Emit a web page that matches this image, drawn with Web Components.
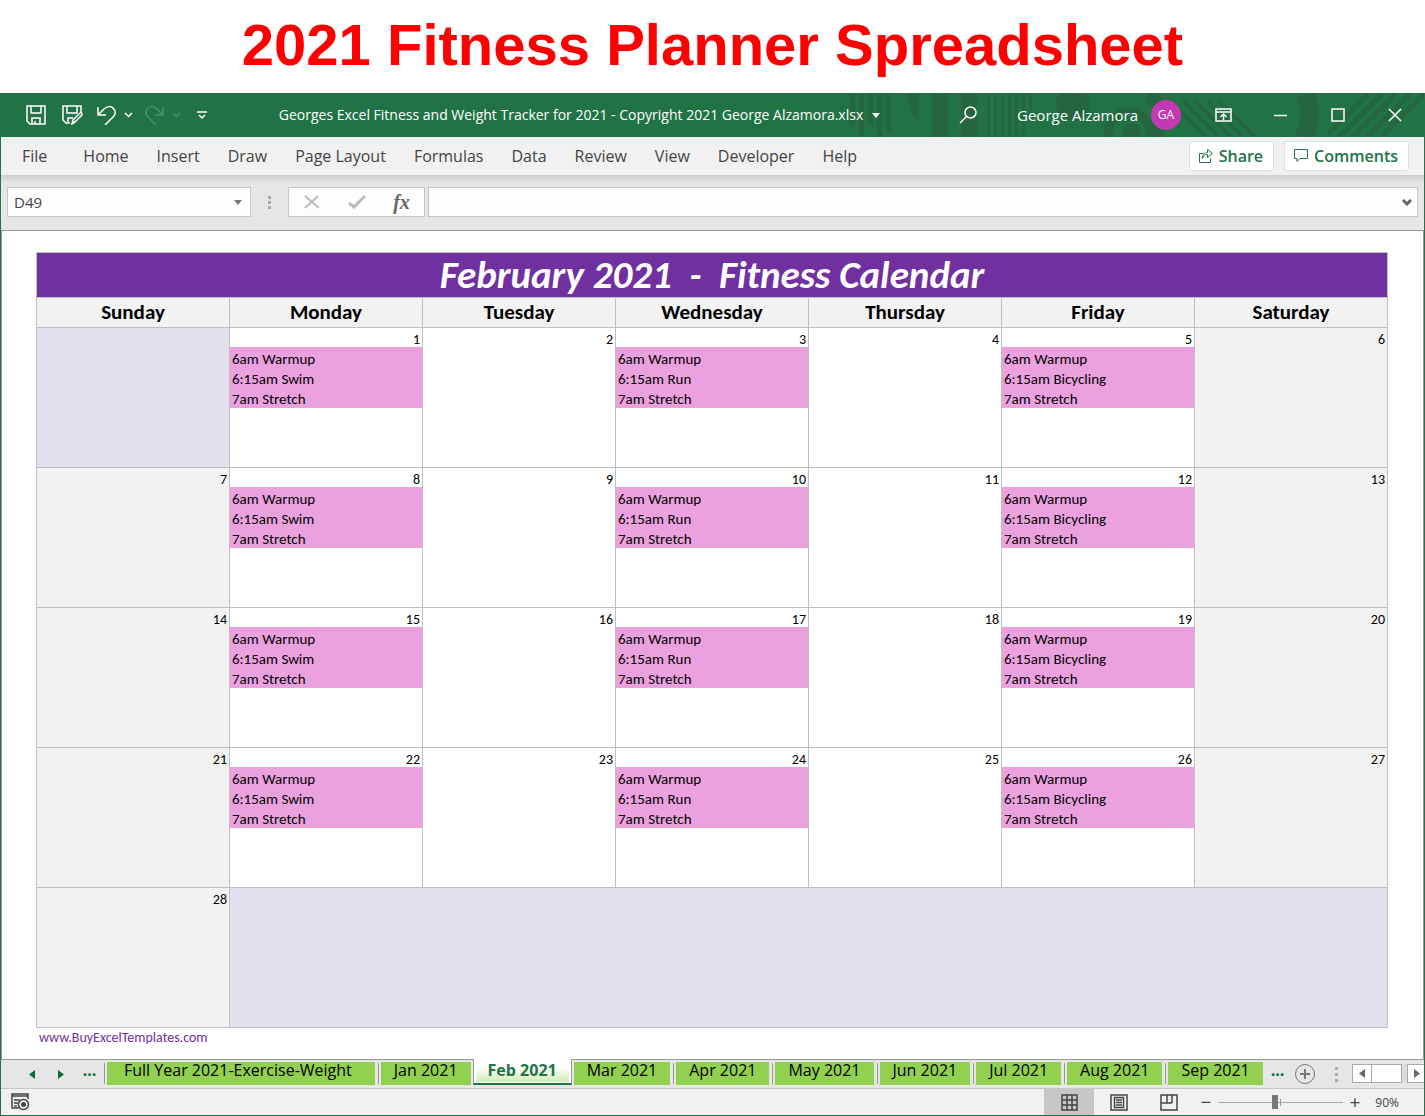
<!DOCTYPE html>
<html lang="en">
<head>
<meta charset="utf-8">
<title>2021 Fitness Planner Spreadsheet</title>
<style>
  html, body { margin: 0; height: 100%; }
  body {
    display: flex;
    flex-direction: column;
    min-height: 100vh;
    background: #fff;
    font-family: "Open Sans", "Noto Sans", sans-serif;
  }
  h1 {
    margin: 0;
    padding: 12px 0 15px;
    color: #f00;
    font: bold 58px/66px "Liberation Sans", Arial, sans-serif;
    text-align: center;
  }
</style>
</head>
<body>
<h1>2021 Fitness Planner Spreadsheet</h1>
<excel-window>
  <title-bar slot="title" user="George Alzamora" initials="GA">Georges Excel Fitness and Weight Tracker for 2021 - Copyright 2021 George Alzamora.xlsx</title-bar>
  <ribbon-tabs slot="ribbon" tabs="File,Home,Insert,Draw,Page Layout,Formulas,Data,Review,View,Developer,Help"></ribbon-tabs>
  <formula-bar slot="formula" cell="D49"></formula-bar>
  <fitness-calendar heading="February 2021&nbsp; -&nbsp; Fitness Calendar" start="1" days="28">
    <a href="#" slot="credit">www.BuyExcelTemplates.com</a>
  </fitness-calendar>
  <sheet-tabs slot="tabs" active="Feb 2021" sheets="Full Year 2021-Exercise-Weight,Jan 2021,Feb 2021,Mar 2021,Apr 2021,May 2021,Jun 2021,Jul 2021,Aug 2021,Sep 2021"></sheet-tabs>
  <status-bar slot="status" zoom="90"></status-bar>
</excel-window>

<script>
"use strict";

const ICONS = {
  save: [20, 20, '<path d="M1 1h18v18H4l-3-3z M5 1v7h10V1 M6 19v-6h8v6 M9 16v3"/>'],
  saveas: [21, 20, '<path d="M8 18H4l-3-3V1h18v7 M5 1v7h10V1 M6 18v-5h5"/><path d="M10 19l1-4 7-7q2-1 2 2l-7 7z M11 16l2 2"/>'],
  undo: [19, 20, '<path d="M1 2v8h8 M1 10l6-6C10 1 14 1 16 3c3 3 3 6 0 9l-8 8"/>'],
  redo: [19, 20, '<path d="M18 2v8h-8 M18 10l-6-6C9 1 5 1 3 3c-3 3-3 6 0 9l8 8"/>'],
  chevron: [9, 6, '<path d="M1 1l3.5 3.5L8 1"/>'],
  customize: [10, 9, '<path d="M0 1h10 M2 4l3 3 3-3"/>'],
  caret: [8, 5, '<path class="f" d="M0 0h8L4 5z"/>'],
  search: [18, 18, '<circle cx="11.5" cy="6.5" r="5.5"/><path d="M7.5 10.5L1 17"/>'],
  ribbon: [17, 14, '<path d="M1 1h15v12H1z M1 4h15 M8.5 12V6 M5.5 9l3-3 3 3"/>'],
  minimize: [14, 14, '<path d="M0 7.5h13"/>'],
  maximize: [14, 14, '<path d="M1 1h12v12H1z"/>'],
  close: [14, 14, '<path d="M1 1l12 12 M13 1L1 13"/>'],
  share: [14, 15, '<path d="M4.5 5.5h-4v9h11v-4 M3.5 10.5c0-4 2-6 5-6v-3l5 4-5 4v-3c-3 0-4 1-5 4z"/>'],
  comment: [14, 13, '<path d="M.5 .5h13v9H6l-3 3v-3H.5z"/>'],
  cancel: [16, 14, '<path d="M1 1l14 12 M14 1L1 13"/>'],
  enter: [18, 14, '<path stroke-width="3" d="M1 8l5 4L17 1"/>'],
  bars: [10, 7, '<path stroke-width="3" d="M1 1l4 4 4-4"/>'],
  left: [6, 9, '<path class="f" d="M6 0v9L0 4.5z"/>'],
  right: [6, 9, '<path class="f" d="M0 0v9l6-4.5z"/>'],
  plus: [20, 20, '<circle cx="10" cy="10" r="9.5"/><path stroke-width="2" d="M5 10h10 M10 5v10"/>'],
  record: [19, 18, '<path d="M8 15H1V1h16v5 M1 3h16 M3 7h6 M3 10h4 M3 13h3"/><circle cx="12.5" cy="11.5" r="5"/><circle class="f" cx="12.5" cy="11.5" r="2.5"/>'],
  grid: [17, 17, '<path d="M1 1h15v15H1z M1 6h15 M1 11h15 M6 1v15 M11 1v15"/>'],
  page: [18, 17, '<path d="M1 1h16v15H1z M4.5 3.5h9v10h-9z M6 6h6 M6 8.5h6 M6 11h6"/>'],
  break: [18, 17, '<path d="M1 1h16v15H1z M7 1v8 M12 1v8 M1 9h11"/>']
};

class UiIcon extends HTMLElement {
  constructor() {
    super();
    this.attachShadow({ mode: 'open' });
  }
  connectedCallback() {
    const [w, h, body] = ICONS[this.getAttribute('name')];
    this.shadowRoot.innerHTML = `
      <style>
        :host { display: block; flex: none; width: ${w}px; height: ${h}px; }
        svg { display: block; fill: none; stroke: currentColor; stroke-width: var(--stroke, 1.5); }
        .f { fill: currentColor; stroke: none; }
      </style>
      <svg width="${w}" height="${h}" viewBox="0 0 ${w} ${h}" aria-hidden="true">${body}</svg>`;
  }
}
customElements.define('ui-icon', UiIcon);

// shared reset for the controls in each shadow root
const RESET = `
  * { box-sizing: border-box; }
  button {
    display: flex; align-items: center; justify-content: center;
    margin: 0; padding: 0; border: 0; background: none; color: inherit; font: inherit;
  }
  input { margin: 0; border: 0; background: none; color: inherit; font: inherit; min-width: 0; }
`;

class ExcelWindow extends HTMLElement {
  constructor() {
    super();
    this.attachShadow({ mode: 'open' }).innerHTML = `
      <style>
        :host {
          flex: 1; display: flex; flex-direction: column; box-sizing: border-box;
          border: 1px solid #217346; border-top: 0; overflow: hidden; background: #fff;
        }
        main { flex: 1; border: solid #999; border-width: 1px 1px 0; }
      </style>
      <slot name="title"></slot>
      <slot name="ribbon"></slot>
      <slot name="formula"></slot>
      <main><slot></slot></main>
      <slot name="tabs"></slot>
      <slot name="status"></slot>`;
  }
}
customElements.define('excel-window', ExcelWindow);

class TitleBar extends HTMLElement {
  constructor() {
    super();
    this.attachShadow({ mode: 'open' });
  }
  connectedCallback() {
    this.shadowRoot.innerHTML = `
      <style>
        ${RESET}
        :host {
          position: relative; display: flex; align-items: center; height: 44px; padding-right: 1px;
          background: #217346; color: #fff; font-size: 15px; line-height: 20px;
        }
        .art { position: absolute; top: 0; right: 0; fill: #256641; stroke: #256641; }
        .quick, .doc, .user, .win { position: relative; display: flex; align-items: center; }
        .quick { padding-left: 17px; }
        .quick button { width: 36px; height: 44px; }
        .quick .wide { width: 32px; }
        .quick .drop { width: 12px; margin-right: 4px; }
        .quick .off { color: #4b8f6a; }
        .doc { flex: 1; justify-content: center; gap: 9px; padding-right: 8px; font-size: 14px; white-space: nowrap; }
        .find { position: relative; width: 38px; height: 44px; }
        .user { gap: 13px; padding: 0 14px 0 30px; }
        .badge {
          width: 30px; height: 30px; border-radius: 50%; background: #c239b3;
          font-size: 12px; line-height: 30px; text-align: center;
        }
        .win button { width: 57px; height: 44px; }
      </style>
      <svg class="art" width="580" height="44" viewBox="0 0 580 44" aria-hidden="true">
        <g stroke="none">
          <path d="M6 1h5v32H6z M15 1h5v41h-5z M24 1h5v32h-5z M33 1h5v43h-5z M42 1h5v38h-5z"/>
          <path d="M63 1h12v30Q65 20 63 1z M88 1h16v43H88z M117 1h16v43h-16z"/>
          <path d="M143 1h3v43h-3z M150 1h3v43h-3z M157 1h3v43h-3z M164 1h3v43h-3z M171 1h3v43h-3z M178 1h3v40l-3 3z M185 1h3v26h-3z"/>
          <circle cx="229" cy="11" r="17"/>
        </g>
        <g fill="none">
          <circle cx="285" cy="40" r="21" stroke-width="9"/>
          <path stroke-width="13" d="M305 1q17 15 7 43"/>
          <path stroke-width="4" d="M339 8l42 42 M351 8l42 42 M363 8l42 42 M375 8l42 42 M331 13l40 40"/>
          <path stroke-width="19" d="M461 0q10 22-2 46"/>
          <path stroke-width="5" d="M524 1l-40 40 M538 1l-44 44 M552 1l-44 44 M566 1l-44 44 M580 1l-44 44"/>
        </g>
        <circle cx="288" cy="39" r="9" stroke="none"/>
      </svg>
      <div class="quick">
        <button aria-label="Save"><ui-icon name="save"></ui-icon></button>
        <button aria-label="Save as"><ui-icon name="saveas"></ui-icon></button>
        <button class="wide" aria-label="Undo"><ui-icon name="undo"></ui-icon></button>
        <button class="drop" aria-label="Undo list"><ui-icon name="chevron"></ui-icon></button>
        <button class="wide off" aria-label="Redo"><ui-icon name="redo"></ui-icon></button>
        <button class="drop off" aria-label="Redo list"><ui-icon name="chevron"></ui-icon></button>
        <button class="wide" aria-label="Customize toolbar"><ui-icon name="customize"></ui-icon></button>
      </div>
      <div class="doc"><slot></slot><ui-icon name="caret"></ui-icon></div>
      <button class="find" aria-label="Search"><ui-icon name="search"></ui-icon></button>
      <div class="user"><span>${this.getAttribute('user')}</span><span class="badge">${this.getAttribute('initials')}</span></div>
      <div class="win">
        <button aria-label="Ribbon display options"><ui-icon name="ribbon"></ui-icon></button>
        <button aria-label="Minimize"><ui-icon name="minimize"></ui-icon></button>
        <button aria-label="Maximize"><ui-icon name="maximize"></ui-icon></button>
        <button aria-label="Close"><ui-icon name="close"></ui-icon></button>
      </div>`;
  }
}
customElements.define('title-bar', TitleBar);

class RibbonTabs extends HTMLElement {
  constructor() {
    super();
    this.attachShadow({ mode: 'open' });
  }
  connectedCallback() {
    const tabs = this.getAttribute('tabs').split(',');
    this.shadowRoot.innerHTML = `
      <style>
        ${RESET}
        :host {
          display: flex; align-items: center; height: 38px; padding: 0 15px 0 7px;
          background: #f1f1f1; color: #444; font-size: 16px; line-height: 22px;
        }
        nav { flex: 1; display: flex; }
        nav button { padding: 0 14px; white-space: nowrap; }
        nav button:first-child { margin-right: 8px; }
        .act {
          gap: 6px; height: 30px; margin-left: 10px; padding: 0 10px 0 9px;
          border: 1px solid #e1dfdd; border-radius: 3px; background: #fff;
          color: #217346; font-weight: 600; --stroke: 1;
        }
      </style>
      <nav>${tabs.map(t => `<button>${t}</button>`).join('')}</nav>
      <button class="act"><ui-icon name="share"></ui-icon>Share</button>
      <button class="act"><ui-icon name="comment"></ui-icon>Comments</button>`;
  }
}
customElements.define('ribbon-tabs', RibbonTabs);

class FormulaBar extends HTMLElement {
  constructor() {
    super();
    this.attachShadow({ mode: 'open' });
  }
  connectedCallback() {
    this.shadowRoot.innerHTML = `
      <style>
        ${RESET}
        :host {
          display: flex; align-items: center; height: 56px; box-sizing: border-box; padding: 0 6px;
          background: linear-gradient(#cfcfcf, #e6e6e6 9px);
          color: #444; font-size: 15px;
        }
        .box { display: flex; height: 30px; border: 1px solid #c6c6c6; background: #fdfdfd; }
        .box input { flex: 1; padding: 0 6px; }
        .name { width: 244px; }
        .name button { width: 24px; color: #777; }
        .grip { width: 37px; display: grid; justify-content: center; gap: 2px; }
        .grip i { width: 3px; height: 3px; background: #aaa; }
        .fx { width: 137px; margin-right: 3px; color: #bbb; --stroke: 2; }
        .fx button { flex: 1; }
        .fx .fn { color: #666; font: italic bold 20px "Liberation Serif", serif; }
        .formula { flex: 1; }
        .formula button { width: 20px; color: #666; }
      </style>
      <div class="box name">
        <input aria-label="Name box" value="${this.getAttribute('cell')}">
        <button aria-label="Names"><ui-icon name="caret"></ui-icon></button>
      </div>
      <div class="grip"><i></i><i></i><i></i></div>
      <div class="box fx">
        <button aria-label="Cancel"><ui-icon name="cancel"></ui-icon></button>
        <button aria-label="Enter"><ui-icon name="enter"></ui-icon></button>
        <button class="fn" aria-label="Insert function">fx</button>
      </div>
      <div class="box formula">
        <input aria-label="Formula">
        <button aria-label="Expand formula bar"><ui-icon name="bars"></ui-icon></button>
      </div>`;
  }
}
customElements.define('formula-bar', FormulaBar);

const WEEKDAYS = ['Sunday', 'Monday', 'Tuesday', 'Wednesday', 'Thursday', 'Friday', 'Saturday'];
const WORKOUTS = {
  1: ['6am Warmup', '6:15am Swim', '7am Stretch'],
  3: ['6am Warmup', '6:15am Run', '7am Stretch'],
  5: ['6am Warmup', '6:15am Bicycling', '7am Stretch']
};

class FitnessCalendar extends HTMLElement {
  constructor() {
    super();
    this.attachShadow({ mode: 'open' });
  }
  // start is the weekday of the 1st, 0 = Sunday
  rows() {
    const start = +this.getAttribute('start');
    const days = +this.getAttribute('days');
    let html = '';
    for (let first = 1 - start; first <= days; first += 7) {
      html += '<tr>';
      if (first < 1) html += `<td class="none" colspan="${1 - first}"></td>`;
      for (let d = Math.max(first, 1); d < first + 7 && d <= days; d++) {
        const wd = d - first;
        const plan = WORKOUTS[wd];
        html += `<td class="${wd % 6 ? '' : 'weekend'}"><div class="num">${d}</div>`;
        if (plan) html += `<ul>${plan.map(p => `<li>${p}</li>`).join('')}</ul>`;
        html += '</td>';
      }
      if (first + 6 > days) html += `<td class="none" colspan="${first + 6 - days}"></td>`;
      html += '</tr>';
    }
    return html;
  }
  connectedCallback() {
    this.shadowRoot.innerHTML = `
      <style>
        ${RESET}
        :host {
          --face: Calibri, Carlito, Lato, sans-serif;
          display: block; padding: 21px 35px 11px 34px;
          font: 14px/20px var(--face); color: #000;
        }
        table {
          width: 100%; table-layout: fixed; border-collapse: separate; border-spacing: 0;
          border: solid #bfbfbf; border-width: 1px 0 0 1px;
        }
        th, td { padding: 0; border: solid #bfbfbf; border-width: 0 1px 1px 0; }
        .title { height: 45px; background: #7030a0; color: #fff; font: italic bold 39px/42px var(--face); }
        .day { height: 30px; background: #f2f2f2; font: bold 21px/29px var(--face); }
        td { height: 140px; vertical-align: top; }
        .weekend { background: #f2f2f2; }
        .none { background: #e4dfec; }
        .num { height: 19px; padding: 2px 2px 0; text-align: right; }
        ul { margin: 0; padding: 2px 2px 0; height: 61px; background: #eba1dd; font-size: 15px; list-style: none; }
        ::slotted(a) { margin-left: 3px; color: #7030a0; text-decoration: none; }
      </style>
      <table>
        <thead>
          <tr><th class="title" colspan="7">${this.getAttribute('heading')}</th></tr>
          <tr>${WEEKDAYS.map(d => `<th class="day">${d}</th>`).join('')}</tr>
        </thead>
        <tbody>${this.rows()}</tbody>
      </table>
      <slot name="credit"></slot>`;
  }
}
customElements.define('fitness-calendar', FitnessCalendar);

class SheetTabs extends HTMLElement {
  constructor() {
    super();
    this.attachShadow({ mode: 'open' });
  }
  connectedCallback() {
    const active = this.getAttribute('active');
    const tabs = this.getAttribute('sheets').split(',');
    this.shadowRoot.innerHTML = `
      <style>
        ${RESET}
        :host {
          display: flex; height: 30px; box-sizing: border-box;
          border: solid #999; border-width: 1px 0; border-bottom-color: #c6c6c6;
          background: #e6e6e6; color: #000; font-size: 16px; line-height: 20px;
        }
        .nav { display: flex; align-items: center; padding-left: 16px; color: #0e6b3a; }
        .nav button { width: 29px; height: 28px; }
        .more { width: 26px; padding-bottom: 8px; color: #0e6b3a; font-weight: bold; }
        .tabs { display: flex; }
        .tab { display: flex; padding: 2px 2px 3px; }
        .tab button { padding: 0 13px 8px; background: #92d050; white-space: nowrap; }
        .tab::before { content: ""; width: 1px; margin: 1px 2px 1px -1px; background: #999; }
        .tab:first-child::before { margin-left: -2px; }
        .tab:first-child button { padding: 0 23px 8px 17px; }
        .on {
          position: relative; margin: -1px 0 3px; padding: 3px 2px 1px; background: #fff;
          border: solid #999; border-width: 0 1px; border-bottom: 2px solid #217346;
        }
        .on::before, .on + .tab::before { content: none; }
        .on button { padding: 0 12px 4px; background: linear-gradient(#fff 20%, #d3ebb9); color: #217346; font-weight: bold; }
        .add { width: 30px; color: #777; --stroke: 1; }
        .grip { margin-left: auto; width: 33px; display: grid; align-content: center; justify-content: center; gap: 3px; }
        .grip i { width: 3px; height: 3px; background: #aaa; }
        .scroll { display: flex; align-items: center; margin: 4px 0 5px; color: #666; background: #dcdcdc; width: 73px; overflow: hidden; }
        .scroll > * { flex: none; width: 20px; height: 19px; border: 1px solid #aaa; background: #fff; }
        .scroll .thumb { width: 31px; margin: 0 5px 0 -1px; }
      </style>
      <div class="nav">
        <button aria-label="Previous sheet"><ui-icon name="left"></ui-icon></button>
        <button aria-label="Next sheet"><ui-icon name="right"></ui-icon></button>
        <button class="more">...</button>
      </div>
      <div class="tabs">${tabs.map(t => `<div class="tab ${t === active ? 'on' : ''}"><button>${t}</button></div>`).join('')}</div>
      <button class="more">...</button>
      <button class="add" aria-label="New sheet"><ui-icon name="plus"></ui-icon></button>
      <div class="grip"><i></i><i></i><i></i></div>
      <div class="scroll">
        <button aria-label="Scroll left"><ui-icon name="left"></ui-icon></button>
        <span class="thumb"></span>
        <button aria-label="Scroll right"><ui-icon name="right"></ui-icon></button>
      </div>`;
  }
}
customElements.define('sheet-tabs', SheetTabs);

class StatusBar extends HTMLElement {
  constructor() {
    super();
    this.attachShadow({ mode: 'open' });
  }
  connectedCallback() {
    const zoom = this.getAttribute('zoom');
    this.shadowRoot.innerHTML = `
      <style>
        ${RESET}
        :host {
          display: flex; align-items: center; height: 26px; padding: 0 25px 0 10px;
          background: #f1f1f1; color: #444; font-size: 12px;
        }
        .views { display: flex; margin-left: auto; }
        .views button { width: 50px; height: 26px; }
        .views .on { background: #c8c6c4; }
        .step { width: 24px; height: 26px; font-size: 19px; }
        input[type=range] {
          appearance: none; width: 125px; height: 14px;
          background:
            linear-gradient(#999, #999) 62px 50% / 1px 7px no-repeat,
            linear-gradient(#aaa, #aaa) 0 50% / 100% 1px no-repeat;
        }
        input[type=range]::-webkit-slider-thumb { appearance: none; width: 6px; height: 14px; background: #777; }
        output { width: 32px; text-align: right; }
      </style>
      <button aria-label="Record macro"><ui-icon name="record"></ui-icon></button>
      <div class="views">
        <button class="on" aria-label="Normal"><ui-icon name="grid"></ui-icon></button>
        <button aria-label="Page layout"><ui-icon name="page"></ui-icon></button>
        <button aria-label="Page break preview"><ui-icon name="break"></ui-icon></button>
      </div>
      <button class="step" aria-label="Zoom out">−</button>
      <input type="range" aria-label="Zoom" min="0" max="200" value="${zoom}">
      <button class="step" aria-label="Zoom in">+</button>
      <output>${zoom}%</output>`;
  }
}
customElements.define('status-bar', StatusBar);
</script>
</body>
</html>
